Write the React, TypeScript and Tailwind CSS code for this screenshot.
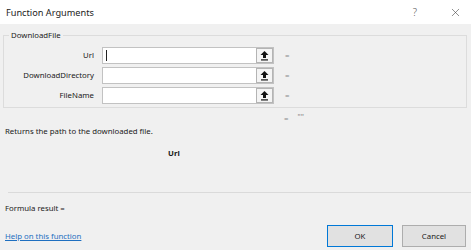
import { X } from "lucide-react";

const ARGS = [
  { label: "Url", caret: true },
  { label: "DownloadDirectory", caret: false },
  { label: "FileName", caret: false },
];

function PickButton() {
  return (
    <div className="flex h-full w-[17px] items-center justify-center border border-[#b4b4b4] bg-[#f4f4f4]">
      <svg width="9" height="11" viewBox="0 0 9 11">
        <path d="M4.5 1 L8.5 5 L6 5 L6 8 L3 8 L3 5 L0.5 5 Z" fill="#111" />
        <rect x="1" y="9.3" width="7" height="1.2" fill="#111" />
      </svg>
    </div>
  );
}

export default function App() {
  return (
    <div
      className="h-[250px] w-[474px] overflow-hidden bg-white text-[7.8px] leading-[11px] text-[#1a1a1a]"
      style={{ fontFamily: '"Noto Sans", "Open Sans", sans-serif' }}
    >
      {/* Title bar */}
      <div className="flex h-[24px] items-center pl-[6px]">
        <span className="text-[9.2px] text-[#222]">Function Arguments</span>
        <span className="ml-auto text-[10px] font-light text-[#555]">?</span>
        <div className="ml-[32px] mr-[12px] flex h-[13px] w-[13px] items-center justify-center">
          <X size={13} strokeWidth={1.1} color="#444" />
        </div>
      </div>

      <div className="flex h-[226px] w-[471px] flex-col bg-[#f0f0f0] pl-[3px]">
        {/* Group box */}
        <div className="relative mt-[11px] h-[73px] w-[464px] border border-[#dcdcdc]">
          <span className="absolute -top-[6px] left-[5px] bg-[#f0f0f0] px-[2px]">
            DownloadFile
          </span>
          <div className="mt-[11px] flex flex-col gap-[3px]">
            {ARGS.map((a) => (
              <div key={a.label} className="flex h-[17px] items-center">
                <span className="w-[98px] pr-[8px] text-right">{a.label}</span>
                <div className="flex h-[17px] w-[172px] items-stretch border border-[#c2c2c2] bg-white">
                  <div className="flex flex-1 items-center pl-[3px]">
                    {a.caret && <div className="h-[11px] w-px bg-[#222]" />}
                  </div>
                  <PickButton />
                </div>
                <span className="ml-[11px] text-[#888]">=</span>
              </div>
            ))}
          </div>
        </div>

        <div className="mt-[5px] flex h-[10px] items-center pl-[281px] text-[#888]">
          <span>=</span>
          <span className="ml-[9px] -mt-[4px]">""</span>
        </div>

        <div className="mt-[3px] pl-[2px]">Returns the path to the downloaded file.</div>
        <div className="mt-[11px] pl-[165px] font-bold">Url</div>

        <div className="mt-[33px] ml-[5px] h-px w-[463px] bg-[#dadada]" />

        <div className="mt-[10px] pl-[2px]">Formula result =</div>

        <div className="mt-[11px] flex items-center">
          <span className="pl-[2px] text-[#1e6fc0] underline">Help on this function</span>
          <button className="ml-auto flex h-[22px] w-[66px] items-center justify-center border border-[#0078d7] bg-[#e1e1e1]">
            OK
          </button>
          <button className="ml-[9px] mr-[5px] flex h-[22px] w-[64px] items-center justify-center border border-[#adadad] bg-[#e1e1e1]">
            Cancel
          </button>
        </div>
      </div>
    </div>
  );
}
